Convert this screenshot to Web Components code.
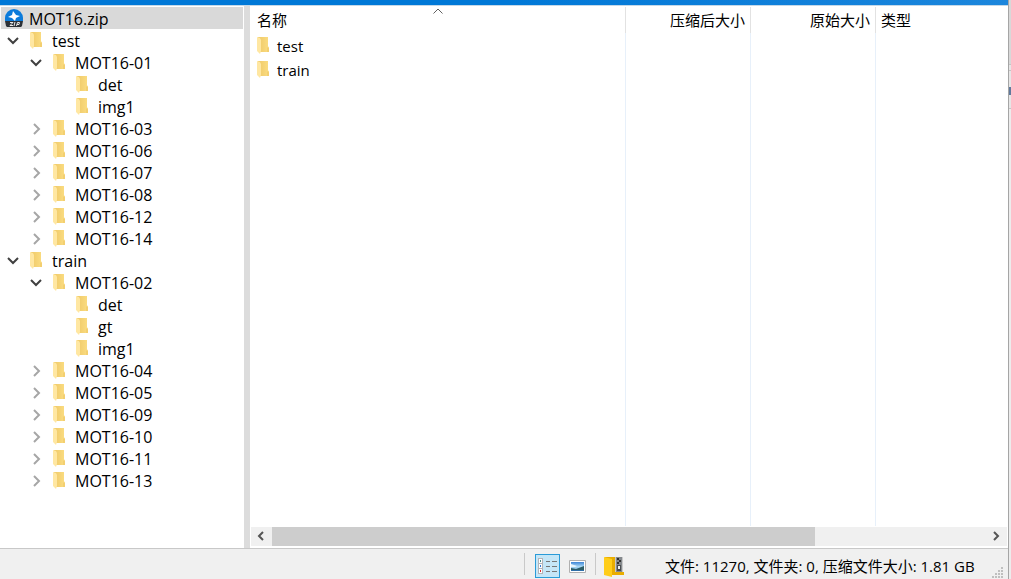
<!DOCTYPE html>
<html lang="zh-CN">
<head>
<meta charset="utf-8">
<title>MOT16.zip</title>
<style>
html, body { margin: 0; height: 100%; overflow: hidden; }
body { font: 16px/22px "Open Sans", "Noto Sans CJK SC", sans-serif; color: #000; }
</style>
</head>
<body>
<archive-window>
  <tree-pane slot="tree">
    <tree-root>MOT16.zip</tree-root>
    <tree-node state="open">test
      <tree-node slot="children" state="open">MOT16-01
        <tree-node slot="children">det</tree-node>
        <tree-node slot="children">img1</tree-node>
      </tree-node>
      <tree-node slot="children" state="closed">MOT16-03</tree-node>
      <tree-node slot="children" state="closed">MOT16-06</tree-node>
      <tree-node slot="children" state="closed">MOT16-07</tree-node>
      <tree-node slot="children" state="closed">MOT16-08</tree-node>
      <tree-node slot="children" state="closed">MOT16-12</tree-node>
      <tree-node slot="children" state="closed">MOT16-14</tree-node>
    </tree-node>
    <tree-node state="open">train
      <tree-node slot="children" state="open">MOT16-02
        <tree-node slot="children">det</tree-node>
        <tree-node slot="children">gt</tree-node>
        <tree-node slot="children">img1</tree-node>
      </tree-node>
      <tree-node slot="children" state="closed">MOT16-04</tree-node>
      <tree-node slot="children" state="closed">MOT16-05</tree-node>
      <tree-node slot="children" state="closed">MOT16-09</tree-node>
      <tree-node slot="children" state="closed">MOT16-10</tree-node>
      <tree-node slot="children" state="closed">MOT16-11</tree-node>
      <tree-node slot="children" state="closed">MOT16-13</tree-node>
    </tree-node>
  </tree-pane>
  <file-list slot="list"></file-list>
  <scroll-strip slot="list"></scroll-strip>
  <status-bar slot="status">文件: 11270, 文件夹: 0, 压缩文件大小: 1.81 GB</status-bar>
</archive-window>
<script>
const define = (name, html) => customElements.define(name, class extends HTMLElement {
  constructor() {
    super();
    const t = document.createElement('template');
    t.innerHTML = html;
    this.attachShadow({ mode: 'open' }).append(t.content.cloneNode(true));
  }
});

define('folder-icon', `
<style>:host{display:block;width:12px;height:18px} svg{display:block}</style>
<svg width="12" height="18" viewBox="0 0 12 18" aria-hidden="true">
  <defs><linearGradient id="g" x2="1"><stop stop-color="#efc968"/><stop offset="1" stop-color="#fbdd82"/></linearGradient></defs>
  <path d="M1 1h10v9l1 2v4H1z" fill="url(#g)"/>
  <path d="M10 12l1-1 1 1v4h-2z" fill="#f3cf70"/>
  <path d="M0 1l3 1 1 2v11l-1 3-3-3z" fill="#ffe7a2"/>
</svg>`);

define('archive-window', `
<style>
:host{display:grid;grid-template-columns:minmax(0,1fr) 3px;height:100vh;background:#fff}
.win{display:flex;flex-direction:column;min-height:0}
.title{height:5px;background:linear-gradient(90deg,#0078d7 50%,#1c86dc);border-bottom:1px solid #c4d8e8}
.body{flex:1;min-height:0;display:flex;padding-top:1px}
.split{width:6px;background:#dcdcdc;margin-top:-1px}
.right{flex:1;min-width:0;display:flex;flex-direction:column}
.edge{border-left:1px solid #a5a5a5;background:linear-gradient(#d8d8d8 64px,#c4c4c4 64px 65px,#e6e6e6 65px 70px,#c4c4c4 70px 71px,#e6e6e6 71px 87px,#60799c 87px 95px,#e6e6e6 95px 108px,#c4c4c4 108px 109px,#ececec 109px)}
</style>
<div class="win">
  <div class="title"></div>
  <div class="body"><slot name="tree"></slot><div class="split"></div><div class="right"><slot name="list"></slot></div></div>
  <slot name="status"></slot>
</div>
<div class="edge"></div>`);

define('tree-pane', `
<style>:host{display:block;width:244px;flex:none;overflow:hidden}</style>
<slot></slot>`);

define('tree-root', `
<style>
:host{display:flex;align-items:center;gap:6px;height:22px;margin:0 1px;padding-left:4px;background:#d9d9d9}
svg{display:block}
span{padding-top:1px}
</style>
<svg width="18" height="18" viewBox="0 0 18 18" aria-hidden="true">
  <path d="M0 12V9a9 9 0 0 1 18 0v3z" fill="#0b7bdb"/>
  <path d="M8 2l3 4 4 1-4 2-1 3-3-3-4-1 4-2z" fill="#fff"/>
  <path d="M0 12h18l-1 5-1 1H2l-1-1z" fill="#2c3137"/>
  <path d="M5 13.500h3l-3 3h3M10 13l-1 4M11.500 17l1-3.500h2l-.5 2h-2" fill="none" stroke="#e8e8e8"/>
</svg>
<span><slot></slot></span>`);

customElements.define('tree-node', class extends HTMLElement {
  constructor() {
    super();
    const state = this.getAttribute('state');
    const name = this.firstChild ? this.firstChild.textContent.trim() : '';
    const chevron = state === 'open'
      ? '<path d="M1 4l5 5 5-5" stroke="#404040" stroke-width="2"/>'
      : '<path d="M4 2l5 5-5 5" stroke="#a6a6a6" stroke-width="2"/>';
    this.attachShadow({ mode: 'open' }).innerHTML = `
<style>
:host{display:block}
.row{display:flex;align-items:center;height:22px}
.gap,button{width:26px;height:22px;flex:none;margin:0 4px 0 0}
button{display:grid;place-items:center;padding:0;border:0;background:none}
folder-icon{margin-right:10px}
.label{padding-top:1px}
.kids{padding-left:23px}
svg{fill:none}
</style>
<div class="row">${state
  ? `<button aria-label="${name}" aria-expanded="${state === 'open'}"><svg width="12" height="13" viewBox="0 0 12 13">${chevron}</svg></button>`
  : '<span class="gap"></span>'}<folder-icon></folder-icon><span class="label"><slot></slot></span></div>
<div class="kids"><slot name="children"></slot></div>`;
  }
});

define('file-list', `
<style>
:host{display:flex;flex:1;min-height:0}
table{width:100%;height:100%;border-collapse:separate;border-spacing:0;table-layout:fixed}
th,td{box-sizing:border-box;padding:0 5px 0 7px;border-right:1px solid #e7f0fa;text-align:left;font-weight:400}
th{height:26px;border-color:#e2e2e2;font-size:15px;position:relative}
th.num{text-align:right}
td{height:24px;font-size:15px}
th:last-child,td:last-child{border:0;padding-left:5px}
.name{width:376px}.num{width:125px}
.fill td{height:auto}
.item{display:flex;align-items:center;gap:8px}
.label{padding-top:1px}
.sort{position:absolute;left:50%;top:1px;margin-left:-5px}
</style>
<table>
<thead><tr><th class="name">名称<svg class="sort" width="10" height="6" viewBox="0 0 10 6" aria-hidden="true"><path d="M.5 5.500l4.500-4.500 4.500 4.500" fill="none" stroke="#606060"/></svg></th><th class="num">压缩后大小</th><th class="num">原始大小</th><th>类型</th></tr></thead>
<tbody>
<tr><td><div class="item"><folder-icon></folder-icon><span class="label">test</span></div></td><td></td><td></td><td></td></tr>
<tr><td><div class="item"><folder-icon></folder-icon><span class="label">train</span></div></td><td></td><td></td><td></td></tr>
<tr class="fill"><td></td><td></td><td></td><td></td></tr>
</tbody>
</table>`);

define('scroll-strip', `
<style>
:host{display:flex;height:19px;margin:1px 1px 2px;background:#f0f0f0}
button{width:21px;flex:none;padding:0;border:0;background:none;display:grid;place-items:center}
.track{flex:1;display:flex}
.thumb{width:76%;background:#cdcdcd}
path{fill:none;stroke:#555;stroke-width:2}
</style>
<button aria-label="向左滚动"><svg width="11" height="11" viewBox="0 0 11 11"><path d="M7 1L3 5l4 4"/></svg></button>
<div class="track"><div class="thumb"></div></div>
<button aria-label="向右滚动"><svg width="11" height="11" viewBox="0 0 11 11"><path d="M3 1l4 4-4 4"/></svg></button>`);

define('status-bar', `
<style>
:host{display:flex;align-items:center;justify-content:flex-end;height:30px;border-top:1px solid #c8c8c8;background:#f0f0f0;font-size:15px}
.sep{width:1px;height:22px;background:#c9c9c9}
button{box-sizing:border-box;padding:0;border:0;background:none;display:grid;place-items:center;height:24px;margin-top:4px}
.on{width:25px;border:1px solid #2a9bd8;background:#c5e6f7;margin-left:10px}
.thumbs{width:35px}
.zip{width:37px;margin-right:32px}
svg{display:block}
.text{width:327px;white-space:nowrap;margin-top:4px}
.grip{align-self:flex-end;margin:0 4px 0 0}
</style>
<span class="sep"></span>
<button class="on" aria-label="详细信息" aria-pressed="true"><svg width="21" height="18" viewBox="0 0 21 18">
<path d="M1 1h5v16H1z" fill="#b4b4b8"/><path d="M2 2h3v4H2zM2 7h3v4H2zM2 12h3v4H2z" fill="#fff"/>
<path d="M3 3h1v2H3z" fill="#4a8a8a"/><path d="M3 8h1v2H3z" fill="#3579d8"/><path d="M3 13h1v2H3z" fill="#e02828"/>
<path d="M9 4h4v1H9zM9 9h4v1H9zM9 14h4v1H9zM15 4h5v1h-5zM15 9h5v1h-5zM15 14h5v1h-5z" fill="#777"/></svg></button>
<button class="thumbs" aria-label="缩略图"><svg width="17" height="13" viewBox="0 0 17 13">
<defs><linearGradient id="sky" x2="0" y2="1"><stop stop-color="#3c84d6"/><stop offset=".5" stop-color="#a9d8f5"/><stop offset="1" stop-color="#7fb6dd"/></linearGradient></defs>
<path d="M.5.5h16v12H.5z" fill="#fff" stroke="#b0b0b0"/><path d="M2 2h13v9H2z" fill="url(#sky)"/><path d="M2 4l3 1 3 1-2 1H2z" fill="#e8f5fc"/><path d="M2 8l5 1 8-3v5H2z" fill="#2d5d66"/><path d="M2 10h13v1H2z" fill="#2f6fa8"/></svg></button>
<span class="sep"></span>
<button class="zip" aria-label="压缩文件"><svg width="21" height="21" viewBox="0 0 21 21">
<path d="M1 1h18v15h1v3H2z" fill="#e9ad00"/><path d="M0 1l8 2v18l-8-2z" fill="#ffcd19"/>
<path d="M11 1h8v15h-8z" fill="#85898d"/><path d="M11 1h1v15h-1zM18 1h1v15h-1z" fill="#c9c9c9"/><path d="M13 2h2v2h-2zM15 4h2v2h-2zM13 6h2v2h-2z" fill="#333"/><path d="M13 9h4v6h-4z" fill="#4b4e51"/><path d="M14 10h2v3h-2z" fill="#eee"/></svg></button>
<span class="text"><slot></slot></span>
<svg class="grip" width="12" height="12" viewBox="0 0 12 12" aria-hidden="true"><path d="M9 0h2v2H9zM6 3h2v2H6zM9 3h2v2H9zM3 6h2v2H3zM6 6h2v2H6zM9 6h2v2H9zM0 9h2v2H0zM3 9h2v2H3zM6 9h2v2H6zM9 9h2v2H9z" fill="#bfbfbf"/></svg>`);
</script>
</body>
</html>
